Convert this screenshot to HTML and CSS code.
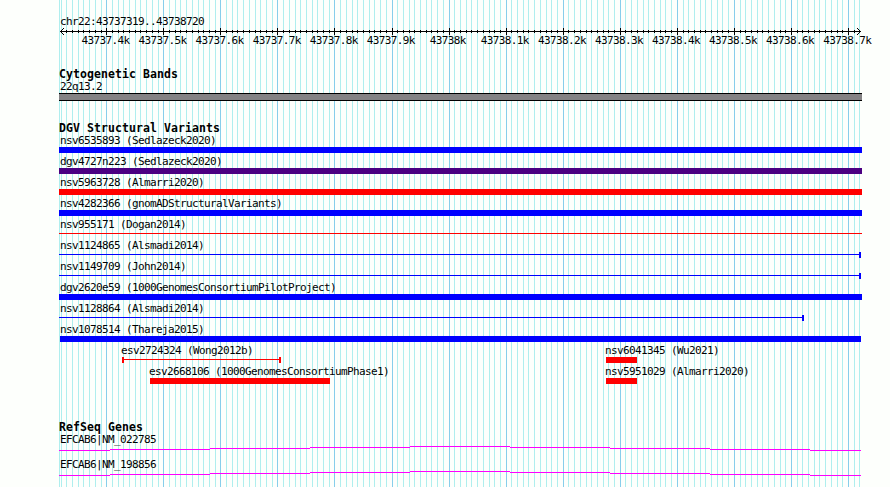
FILE: index.html
```html
<!DOCTYPE html>
<html lang="en">
<head>
<meta charset="utf-8">
<title>chr22:43737319..43738720</title>
<link rel="stylesheet" href="styles.css">
</head>
<body>
<main class="browser">
<svg class="grid" width="890" height="487" shape-rendering="crispEdges" aria-hidden="true"><path class="minor"/><path class="major"/></svg>
<header class="region">chr22:43737319..43738720</header>
<svg class="ruler" width="890" height="8" shape-rendering="crispEdges" aria-hidden="true"><path class="ticks"/><path d="M60 3.5H861M60.5 3v1M61.5 2v3M62.5 1v1m0 3v1M63.5 0v1m0 5v1M860.5 3v1M859.5 2v3M858.5 1v1m0 3v1M857.5 0v1m0 5v1"/></svg>
<div class="scale"><span>43737.4k</span><span>43737.5k</span><span>43737.6k</span><span>43737.7k</span><span>43737.8k</span><span>43737.9k</span><span>43738k</span><span>43738.1k</span><span>43738.2k</span><span>43738.3k</span><span>43738.4k</span><span>43738.5k</span><span>43738.6k</span><span>43738.7k</span></div>
<section class="cyto"><h2>Cytogenetic Bands</h2><p>22q13.2</p><div class="band"></div></section>
<section class="variants"><h2>DGV Structural Variants</h2>
<div class="row"><p>nsv6535893 (Sedlazeck2020)</p><div class="bar gain"></div></div>
<div class="row"><p>dgv4727n223 (Sedlazeck2020)</p><div class="bar complex"></div></div>
<div class="row"><p>nsv5963728 (Almarri2020)</p><div class="bar loss"></div></div>
<div class="row"><p>nsv4282366 (gnomADStructuralVariants)</p><div class="bar gain"></div></div>
<div class="row"><p>nsv955171 (Dogan2014)</p><div class="line red"></div></div>
<div class="row"><p>nsv1124865 (Alsmadi2014)</p><div class="line blue end"></div></div>
<div class="row"><p>nsv1149709 (John2014)</p><div class="line blue end"></div></div>
<div class="row"><p>dgv2620e59 (1000GenomesConsortiumPilotProject)</p><div class="bar gain"></div></div>
<div class="row"><p>nsv1128864 (Alsmadi2014)</p><div class="line blue end short"></div></div>
<div class="row"><p>nsv1078514 (Thareja2015)</p><div class="bar gain inset"></div></div>
<div class="pair first"><div class="row"><p>esv2724324 (Wong2012b)</p><div class="line red start end wong"></div></div><div class="row"><p>nsv6041345 (Wu2021)</p><div class="bar loss small"></div></div></div>
<div class="pair second"><div class="row"><p>esv2668106 (1000GenomesConsortiumPhase1)</p><div class="bar loss phase"></div></div><div class="row"><p>nsv5951029 (Almarri2020)</p><div class="bar loss small"></div></div></div>
</section>
<section class="genes"><h2>RefSeq Genes</h2>
<div class="gene"><p>EFCAB6|NM_022785</p><svg width="803" height="5" shape-rendering="crispEdges"><path d="M0 4.5H51M51 3.5H151M151 2.5H251M251 1.5H351M351 .5H451M451 1.5H551M551 2.5H651M651 3.5H751M751 4.5H802"/></svg></div>
<div class="gene"><p>EFCAB6|NM_198856</p><svg width="803" height="5" shape-rendering="crispEdges"><path d="M0 4.5H51M51 3.5H151M151 2.5H251M251 1.5H351M351 .5H451M451 1.5H551M551 2.5H651M651 3.5H751M751 4.5H802"/></svg></div>
</section>
</main>
<script src="grid.js"></script>
</body>
</html>
```
FILE: styles.css
```css
body { margin: 0; background: #fdfffc; color: #000; }
.browser { position: relative; width: 890px; height: 487px; overflow: hidden; display: flex; flex-direction: column; font: 11px/15px "DejaVu Sans Mono", monospace; letter-spacing: -0.622px; white-space: nowrap; }
.grid { position: absolute; inset: 0; z-index: -1; }
path { fill: none; stroke-width: 1; }
.minor { stroke: #afeeee; }
.major { stroke: #87ceeb; }
p, h2 { margin: 0; font-weight: normal; }
.region { height: 14px; margin: 14px 0 0 60px; }
.ruler { display: block; flex: none; stroke: #000; }
.scale { display: flex; height: 14px; margin: -3px 0 0 77px; }
.scale span { width: 57.06px; flex: none; text-align: center; }
section { margin-left: 59px; width: 803px; }
h2 { font-size: 11.5px; line-height: 12px; height: 11px; font-weight: bold; letter-spacing: 0.077px; }
p { padding-left: 1px; height: 14px; }
.cyto { margin-top: 21px; }
.band { height: 6px; background: #848284; border: solid #000; border-width: 1px 0; }
.variants { margin-top: 21px; }
.row { height: 21px; }
.bar { height: 6px; }
.gain { background: #00f; }
.loss { background: #f00; }
.complex { background: #4b0082; }
.inset { margin: 0 1px; }
.line { height: 6px; box-sizing: border-box; background: linear-gradient(currentColor, currentColor) 0 2px / 100% 1px no-repeat; }
.red { color: #f00; }
.blue { color: #00f; }
.end { border-right: 2px solid; margin-right: 1px; }
.start { border-left: 2px solid; }
.short { width: 745px; }
.pair { display: grid; }
.pair p { padding: 0; margin-left: -1px; }
.first { grid-template-columns: 484px 1fr; margin-left: 63px; }
.second { grid-template-columns: 456px 1fr; margin-left: 91px; }
.wong { width: 159px; }
.phase { width: 180px; }
.small { width: 31px; }
.genes { margin-top: 36px; }
.gene { height: 25px; }
.gene svg { display: block; stroke: #f0f; }
```
FILE: grid.js
```javascript
const origin = 449.1, step = 5.706;
let minor = "M59.5 0V487", major = "", ticks = "";
for (let n = -68; n <= 72; n++) {
  const x = Math.floor(origin + step * n) + 0.5;
  if (n % 10 === 0) {
    major += `M${x} 0V487`;
    ticks += `M${x} 0V7`;
  } else {
    minor += `M${x} 0V487`;
    ticks += `M${x} 2V5`;
  }
}
document.querySelector(".minor").setAttribute("d", minor);
document.querySelector(".major").setAttribute("d", major);
document.querySelector(".ticks").setAttribute("d", ticks);
```
